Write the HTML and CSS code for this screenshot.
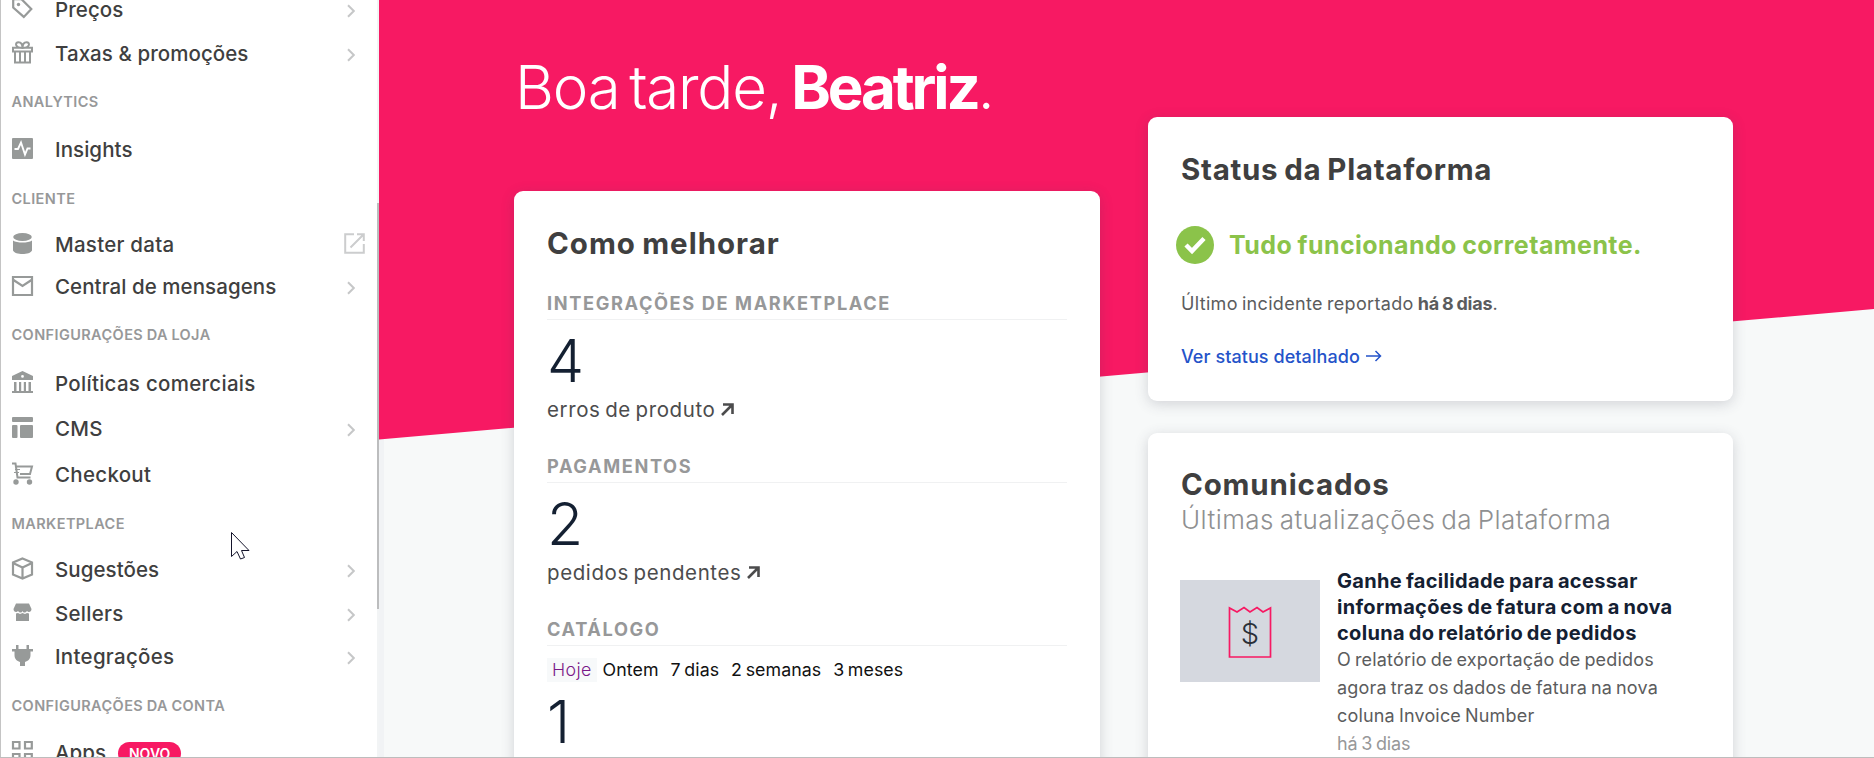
FILE: index.html
```html
<!DOCTYPE html>
<html lang="pt-BR">
<head>
<meta charset="utf-8">
<title>Painel</title>
<link rel="stylesheet" href="styles.css">
</head>
<body>
<div class="app">
  <nav class="sidebar">
    <div class="menu">
      <a class="item"><svg class="icon" viewBox="0 0 21 21"><path d="M1.2 1.2H9.5L19.3 11 11.8 18.9 1.2 9.5Z" fill="none" stroke="currentColor" stroke-width="2.2"/><circle cx="6.5" cy="6.5" r="1.7" fill="currentColor"/></svg><span>Preços</span><svg class="chev" viewBox="0 0 8 14"><path d="M1 1.2 6.8 7 1 12.8"/></svg></a>
      <a class="item"><svg class="icon" viewBox="0 0 21 21"><g fill="none" stroke="currentColor" stroke-width="2"><path d="M1 5.8H20V9.5H1ZM3 10V20.500H18V10M8 10V20M13 10V20M10.500 6C3 6 2.500 .2 6.500 .2C9.500 .2 10.500 3 10.500 6C10.500 3 11.500 .2 14.500 .2C18.500 .2 18 6 10.500 6"/></g></svg><span>Taxas &amp; promoções</span><svg class="chev" viewBox="0 0 8 14"><path d="M1 1.2 6.8 7 1 12.8"/></svg></a>
      <h4 class="section">ANALYTICS</h4>
      <a class="item"><svg class="icon" viewBox="0 0 21 21"><rect width="21" height="21" rx="1" fill="currentColor"/><path d="M2.5 11H6L9 4.500 13 16.500 15.500 10.500H18.500" fill="none" stroke="#fff" stroke-width="1.9"/></svg><span>Insights</span></a>
      <h4 class="section">CLIENTE</h4>
      <a class="item"><svg class="icon" viewBox="0 0 21 21"><g fill="currentColor"><ellipse cx="10.500" cy="4" rx="9.300" ry="4"/><path d="M1 7.500C5 10.300 16 10.300 20 7.500V17.500C18 22.200 3 22.200 1 17.500Z"/></g></svg><span class="mid">Master data</span><svg class="ext" viewBox="0 0 21 21"><path d="M10 1.200H1.200V19.800H19.800V11M13 1.200H19.800V8M19.500 1.500 6.500 14.500"/></svg></a>
      <a class="item"><svg class="icon" viewBox="0 0 21 21"><path d="M1 2H20V20H1ZM1.500 5 10.500 11 19.500 5" fill="none" stroke="currentColor" stroke-width="2.2"/></svg><span>Central de mensagens</span><svg class="chev" viewBox="0 0 8 14"><path d="M1 1.2 6.8 7 1 12.8"/></svg></a>
      <h4 class="section">CONFIGURAÇÕES DA LOJA</h4>
      <a class="item"><svg class="icon" viewBox="0 0 21 21"><path fill="currentColor" fill-rule="evenodd" d="M10.500-1 21 4V8H0V4ZM10.500 3A1.400 1.400 0 1 0 10.500 5.800 1.400 1.400 0 1 0 10.500 3ZM2 10H4.500V19H7V10H9.200V19H11.800V10H14V19H16.500V10H19V19H21V21H0V19H2Z"/></svg><span class="wide">Políticas comerciais</span></a>
      <a class="item"><svg class="icon" viewBox="0 0 21 21"><g fill="currentColor"><rect width="21" height="5" rx="1"/><rect y="8" width="5.500" height="13" rx="1"/><rect x="8" y="8" width="13" height="13" rx="1"/></g></svg><span class="wide">CMS</span><svg class="chev" viewBox="0 0 8 14"><path d="M1 1.2 6.8 7 1 12.8"/></svg></a>
      <a class="item"><svg class="icon" viewBox="0 0 21 21"><path d="M0 .5H3.500L5.500 14.500H18.500M4.500 3.500H20L18 11H8" fill="none" stroke="currentColor" stroke-width="2"/><path d="M3 6.500H8M2 9.500H7" fill="none" stroke="currentColor" stroke-width="1.2"/><circle cx="4" cy="19" r="2.7" fill="currentColor"/><circle cx="17.500" cy="19" r="2.7" fill="currentColor"/></svg><span class="wide">Checkout</span></a>
      <h4 class="section">MARKETPLACE</h4>
      <a class="item"><svg class="icon" viewBox="0 0 21 21"><path d="M10.500.500 20 4.500V16.500L10.500 20.500 1 16.500V4.500ZM1 5 10.500 9.500 20 5M10.500 9.500V20" fill="none" stroke="currentColor" stroke-width="2.2"/></svg><span>Sugestões</span><svg class="chev" viewBox="0 0 8 14"><path d="M1 1.2 6.8 7 1 12.8"/></svg></a>
      <a class="item"><svg class="icon" viewBox="0 0 21 21"><g fill="currentColor"><path d="M4 1.500H17L19.500 7C19.500 10 16.500 11 15 9 13.500 11 11.500 11 10.500 9 9.500 11 7.500 11 6 9 4.500 11 1.500 10 1.500 7Z"/><path d="M4 11.500 6 11 8 12 10.500 11 13 12 15 11 17 11.500V19H4Z"/></g></svg><span class="wide">Sellers</span><svg class="chev" viewBox="0 0 8 14"><path d="M1 1.2 6.8 7 1 12.8"/></svg></a>
      <a class="item"><svg class="icon" viewBox="0 0 21 21"><path fill="currentColor" d="M4 0H6.500V4H14.500V0H17V4H21V6.500H18.500V10C18.500 14 16 16 13 17V21H8V17C5 16 2.500 14 2.500 10V6.500H0V4H4Z"/></svg><span class="wide">Integrações</span><svg class="chev" viewBox="0 0 8 14"><path d="M1 1.2 6.8 7 1 12.8"/></svg></a>
      <h4 class="section">CONFIGURAÇÕES DA CONTA</h4>
      <a class="item"><svg class="icon" viewBox="0 0 21 21"><path d="M1 1H7.500V7.500H1ZM13 1H19.800V7.500H13ZM1 13H7.500V19.800H1ZM13 13H19.800V19.800H13Z" fill="none" stroke="currentColor" stroke-width="2.2"/></svg><span>Apps</span><span class="badge">NOVO</span></a>
    </div>
    <div class="track"><div class="thumb"></div></div>
    <svg class="cursor" viewBox="0 0 19 28"><path d="M.5 .5V24.500L6 19.500 9.500 27 13.500 25.500 10.500 18.500H18Z" fill="#fff" stroke="#14142b"/></svg>
  </nav>
  <main class="main">
    <div class="col left">
      <h1 class="hello">Boa tarde, <b>Beatriz</b>.</h1>
      <section class="card improve">
        <h2 class="title">Como melhorar</h2>
        <h3 class="cap">INTEGRAÇÕES DE MARKETPLACE</h3>
        <div class="num">4</div>
        <div class="what">erros de produto<svg class="ne" viewBox="0 0 13 13"><path d="M2 1.500H11.500V11M11.500 1.500 1 12"/></svg></div>
        <h3 class="cap">PAGAMENTOS</h3>
        <div class="num">2</div>
        <div class="what">pedidos pendentes<svg class="ne" viewBox="0 0 13 13"><path d="M2 1.500H11.500V11M11.500 1.500 1 12"/></svg></div>
        <h3 class="cap">CATÁLOGO</h3>
        <div class="range"><a class="on">Hoje</a><a>Ontem</a><a>7 dias</a><a>2 semanas</a><a>3 meses</a></div>
        <div class="num one">1</div>
      </section>
    </div>
    <div class="col right">
      <section class="card status">
        <h2 class="title">Status da Plataforma</h2>
        <div class="ok"><svg viewBox="0 0 38 38"><circle cx="19" cy="19" r="19" fill="#8bc34a"/><path d="M10 19 16 25 28 12.500" fill="none" stroke="#fff" stroke-width="4.500"/></svg><span>Tudo funcionando corretamente.</span></div>
        <p class="last">Último incidente reportado <b>há 8 dias</b>.</p>
        <a class="link">Ver status detalhado<svg viewBox="0 0 16 12"><path d="M0 6H14M9.500 1 14.500 6 9.500 11"/></svg></a>
      </section>
      <section class="card news">
        <h2 class="title">Comunicados</h2>
        <p class="sub">Últimas atualizações da Plataforma</p>
        <article class="post">
          <svg class="thumbnail" viewBox="0 0 140 102"><rect width="140" height="102" fill="#d5d8df"/><path d="M49.500 77V28L57 32 64 27.500 70 32 77 27.500 83 32 90.500 28V77Z" fill="none" stroke="#f71963" stroke-width="1.700"/><text x="70" y="64" text-anchor="middle">$</text></svg>
          <div>
            <h3 class="post-title">Ganhe facilidade para acessar<br>informações de fatura com a nova<br>coluna do relatório de pedidos</h3>
            <p class="post-body">O relatório de exportação de pedidos<br>agora traz os dados de fatura na nova<br>coluna Invoice Number</p>
            <p class="post-time">há 3 dias</p>
          </div>
        </article>
      </section>
    </div>
  </main>
</div>
</body>
</html>
```
FILE: styles.css
```css
* { box-sizing: border-box; }
html, body { margin: 0; height: 100%; overflow: hidden; }
body { font-family: Inter, "Open Sans", sans-serif; color: #3f3f40; }
h1, h2, h3, h4, p { margin: 0; }
.app { display: flex; height: 758px; overflow: hidden; border-bottom: 1px solid #bdbdbd; }
.sidebar { position: relative; flex: none; display: flex; width: 379px; height: 758px; border-left: 1px solid #c4c4c4; background: #fff; }
.menu { flex: 1; display: grid; margin-top: -12px; grid-template-rows: 44px 44px 52px 44px 54px 38px 46px 50px 48px 42px 50px 48px 44px 44px 42px 56px 38px; }
.item, .section { display: flex; align-items: center; padding-left: 11px; }
.item { font-size: 20.5px; font-weight: 500; letter-spacing: .003em; white-space: nowrap; }
.item > span:not(.badge) { padding-bottom: 2px; }
.item .wide { letter-spacing: .014em; }
.item .mid { letter-spacing: .012em; }
.section { padding: 0 0 2px 10.5px; font-size: 14.5px; font-weight: 600; letter-spacing: .028em; word-spacing: -.04em; color: #979899; }
.icon { flex: none; width: 21px; height: 21px; margin: -3px 22px 0 0; color: #979a99; overflow: visible; }
.chev { width: 8px; height: 14px; margin: 1px 22px 0 auto; fill: none; stroke: #c6c7c8; stroke-width: 2; }
.ext { width: 21px; height: 21px; margin: -3px 12px 0 auto; fill: none; stroke: #cccdce; stroke-width: 2; }
.badge { margin-left: 12px; width: 63px; height: 23px; border-radius: 12px; background: #f71963; color: #fff; font-size: 14px; font-weight: 600; line-height: 23px; text-align: center; }
.track { width: 2px; padding-top: 203px; background: #f2f4f5; }
.thumb { height: 406px; background: #bcbdbe; }
.cursor { position: absolute; left: 230px; top: 532px; width: 19px; height: 28px; }
.main { flex: 1; display: flex; gap: 48px; padding-left: 135px; background: linear-gradient(to right, #f1f3f5 5px, #f7f9f9 5px); position: relative; }
.main::before { content: ""; position: absolute; inset: 0; background: #f71963; clip-path: polygon(0 0, 100% 0, 100% 309px, 0 439.5px); }
.col { position: relative; width: 586px; height: 757px; }
.right { width: 585px; padding-top: 117px; }
.hello { height: 191px; padding: 51px 0 0 1px; font-size: 60px; line-height: 72px; font-weight: 300; letter-spacing: -.02em; word-spacing: -.1em; color: #fff; white-space: nowrap; }
.hello b { font-weight: 700; letter-spacing: -.052em; }
.card { border-radius: 9px; background: #fff; box-shadow: 0 3px 14px rgba(60, 60, 80, .2); padding: 0 33px; white-space: nowrap; }
.improve { height: 590px; padding-top: 34px; }
.title { font-size: 29.5px; line-height: 36px; font-weight: 700; letter-spacing: .034em; word-spacing: -.06em; }
.status .title { letter-spacing: .024em; }
.news .title { letter-spacing: .028em; }
.cap { height: 34px; margin-top: 25px; border-bottom: 1px solid #f0f1f2; font-size: 18.2px; line-height: 35px; font-weight: 700; letter-spacing: .089em; color: #979899; }
.num { height: 80px; font-size: 59px; line-height: 81px; font-weight: 300; color: #142032; }
.num.one { margin-top: -1px; }
.what { display: flex; align-items: center; gap: 6px; height: 24px; padding-bottom: 5px; font-size: 20.5px; letter-spacing: .029em; word-spacing: -.08em; color: #4c4c4d; }
.ne { width: 13px; height: 13px; fill: none; stroke: #4c4c4d; stroke-width: 2.6; }
.range { display: flex; padding-top: 12px; font-size: 17.8px; line-height: 24px; letter-spacing: .003em; word-spacing: -.08em; color: #111; }
.range a { padding: 0 6px; }
.range .on { padding: 0 5px 0 5px; background: #f7f9fa; color: #7a1888; font-weight: 300; letter-spacing: .02em; }
.status { height: 284px; padding-top: 34px; }
.ok { display: flex; align-items: center; gap: 15px; height: 38px; margin: 39px 0 0 -5px; font-size: 25px; font-weight: 700; letter-spacing: .017em; word-spacing: -.04em; color: #8bc34a; }
.ok svg { width: 38px; height: 38px; }
.last { margin-top: 27px; font-size: 18px; line-height: 25px; letter-spacing: .018em; word-spacing: -.07em; color: #5b5c5d; }
.last b { letter-spacing: -.008em; }
.link { display: flex; align-items: center; gap: 6px; margin-top: 28px; height: 24px; font-size: 18px; font-weight: 500; letter-spacing: .004em; color: #2453c9; }
.link svg { width: 16px; height: 12px; fill: none; stroke: #2453c9; stroke-width: 1.5; }
.news { height: 400px; margin-top: 32px; padding-top: 33px; }
.sub { font-size: 26px; line-height: 35px; font-weight: 300; letter-spacing: .016em; word-spacing: -.07em; color: #8f9091; }
.post { display: flex; gap: 17px; margin: 31px 0 0 -1px; }
.post-title { font-size: 20px; line-height: 26px; font-weight: 700; letter-spacing: .016em; word-spacing: -.06em; color: #142032; }
.post-body, .post-time { font-size: 18px; line-height: 28px; letter-spacing: .01em; word-spacing: -.07em; color: #5b5c5d; }
.post-time { letter-spacing: -.006em; color: #979899; }
.thumbnail { flex: none; width: 140px; height: 102px; margin-top: 12px; }
.thumbnail text { font-size: 29px; font-weight: 300; fill: #2a3038; }
```
